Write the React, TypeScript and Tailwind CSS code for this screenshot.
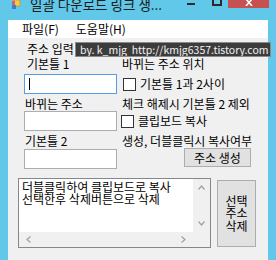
import React from "react";

const F = "font-['Noto_Sans_CJK_KR',sans-serif]";

function Checkbox() {
  return <div className="w-[13px] h-[13px] bg-white border border-[#333333] shrink-0" />;
}

export default function App() {
  return (
    <div className={`relative w-[276px] h-[260px] overflow-hidden bg-[#62c8e9] flex flex-col ${F} text-[12px] text-black`}>
      {/* title bar */}
      <div className="h-[20px] flex items-start shrink-0">
        <svg width="10" height="10" viewBox="0 0 10 10" className="ml-[11px] mt-[0px] shrink-0">
          <rect x="3" y="0" width="6" height="6" fill="#f6c94a" stroke="#b88a1c" strokeWidth="0.6" />
          <rect x="1" y="1" width="3" height="4" fill="#e05a6a" />
          <rect x="1" y="5" width="4" height="4" fill="#3b7fd0" />
        </svg>
        <div className="ml-[9px] -mt-[5px] text-[13.5px] leading-[18px] text-[#1b1b1b] whitespace-nowrap">일괄 다운로드 링크 생...</div>
        <div className="ml-auto flex items-start">
          <div className="w-[8px] h-[2px] bg-[#2a2a2a] mt-[3px]" />
          <div className="ml-[17px] w-[10px] h-[8px] -mt-[2px] border-2 border-[#2a2a2a] border-t-0" />
          <div className="ml-[6px] w-[41px] h-[8px] bg-[#c75050] flex items-start justify-center">
            <svg width="8" height="6" viewBox="0 0 8 6">
              <path d="M1 -1 L7 6 M7 -1 L1 6" stroke="white" strokeWidth="1.6" />
            </svg>
          </div>
          <div className="w-[7px]" />
        </div>
      </div>

      {/* client */}
      <div className="mx-[8px] flex-1 bg-[#f0f0f0] flex flex-col">
        <div className="h-[18px] bg-white flex items-center shrink-0">
          <span className="ml-[14px] leading-[14px]">파일(F)</span>
          <span className="ml-[17px] leading-[14px]">도움말(H)</span>
        </div>

        <div className="flex flex-col pl-[16px] pr-[10px]">
          <div className="h-[18px] flex items-center pt-[3px]">
            <span className="pl-[3px] leading-[14px]">주소 입력</span>
          </div>
          <div className="h-[16px] flex items-center">
            <span className="w-[97px] pl-[3px] leading-[14px]">기본틀 1</span>
            <span className="pl-[1px] leading-[14px]">바뀌는 주소 위치</span>
          </div>
          <div className="mt-[2px] h-[20px] flex items-center">
            <div className="w-[93px] h-[20px] bg-white border border-[#569de5] flex items-center pl-[4px]">
              <div className="w-[1px] h-[12px] bg-black" />
            </div>
            <div className="ml-[6px] flex items-center gap-[4px]">
              <Checkbox />
              <span className="leading-[14px]">기본틀 1과 2사이</span>
            </div>
          </div>
          <div className="h-[17px] flex items-end">
            <span className="w-[97px] pl-[1px] leading-[14px]">바뀌는 주소</span>
            <span className="pl-[1px] leading-[14px]">체크 해제시 기본틀 2 제외</span>
          </div>
          <div className="h-[20px] flex items-center">
            <div className="w-[93px] h-[20px] bg-white border border-[#abadb3]" />
            <div className="ml-[4px] flex items-center gap-[4px]">
              <Checkbox />
              <span className="leading-[14px]">클립보드 복사</span>
            </div>
          </div>
          <div className="h-[17px] flex items-end">
            <span className="w-[97px] pl-[1px] leading-[14px]">기본틀 2</span>
            <span className="pl-[1px] leading-[14px]">생성, 더블클릭시 복사여부</span>
          </div>
          <div className="h-[21px] flex items-start">
            <div className="w-[93px] h-[20px] mt-[1px] bg-white border border-[#abadb3]" />
            <button className="ml-[67px] w-[67px] h-[19px] bg-[#e1e1e1] border border-[#adadad] flex items-center justify-center leading-[14px]">
              주소 생성
            </button>
          </div>
        </div>

        <div className="mt-[9px] flex items-start pl-[10px]">
          <div className="w-[193px] h-[70px] bg-white border border-[#828790] flex flex-col">
            <div className="flex flex-1">
              <div className="flex-1 pl-[3px] pt-[2px] leading-[12px] whitespace-nowrap overflow-hidden">
                <div>더블클릭하여 클립보드로 복사</div>
                <div>선택한후 삭제버튼으로 삭제</div>
              </div>
              <div className="w-[17px] bg-[#f0f0f0] flex flex-col items-center justify-between py-[6px]">
                <svg width="7" height="5" viewBox="0 0 7 5"><path d="M0.5 4.5 L3.5 1 L6.5 4.5" stroke="#a0a0a0" fill="none" strokeWidth="1.2" /></svg>
                <svg width="7" height="5" viewBox="0 0 7 5"><path d="M0.5 0.5 L3.5 4 L6.5 0.5" stroke="#a0a0a0" fill="none" strokeWidth="1.2" /></svg>
              </div>
            </div>
            <div className="h-[15px] flex bg-[#f0f0f0]">
              <div className="flex-1 flex items-center justify-between px-[7px]">
                <svg width="5" height="7" viewBox="0 0 5 7"><path d="M4.5 0.5 L1 3.5 L4.5 6.5" stroke="#a0a0a0" fill="none" strokeWidth="1.2" /></svg>
                <svg width="5" height="7" viewBox="0 0 5 7"><path d="M0.5 0.5 L4 3.5 L0.5 6.5" stroke="#a0a0a0" fill="none" strokeWidth="1.2" /></svg>
              </div>
              <div className="w-[17px]" />
            </div>
          </div>
          <button className="ml-[6px] mt-[2px] w-[39px] h-[67px] bg-[#e1e1e1] border border-[#adadad] flex flex-col items-center justify-center leading-[12.5px] text-[12px]">
            <span>선택</span>
            <span>주소</span>
            <span>삭제</span>
          </button>
        </div>
      </div>

      {/* tooltip */}
      <div className="absolute left-[75px] top-[42px] w-[196px] h-[15px] bg-[#3c3c3c] border border-[#8a8a8a] text-[#f2f2f2] text-[10.5px] leading-[13px] pl-[4px] whitespace-nowrap overflow-hidden">
        by. k_mjg&nbsp;&nbsp;http://kmjg6357.tistory.com
      </div>
    </div>
  );
}
